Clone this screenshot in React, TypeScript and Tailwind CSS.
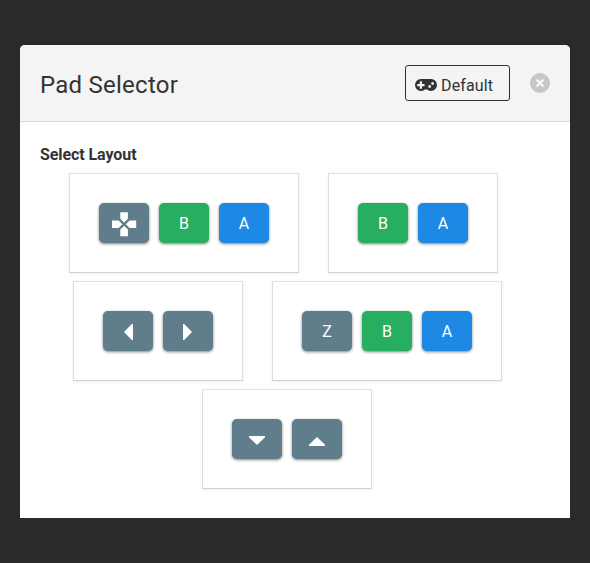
import type { ReactNode } from 'react';

const tones = {
  slate: 'bg-[#607d8b]',
  green: 'bg-[#27ae60]',
  blue: 'bg-[#1e88e5]',
};

function Key({ tone = 'slate', children }: { tone?: keyof typeof tones; children: ReactNode }) {
  return (
    <button
      className={`flex h-10 w-[50px] items-center justify-center rounded-[5px] pt-px text-base text-white shadow-[0_1px_3px_rgba(0,0,0,0.5)] ${tones[tone]}`}
    >
      {children}
    </button>
  );
}

function Card({ children }: { children: ReactNode }) {
  return (
    <div className="flex h-[100px] gap-2.5 border border-t-[#e2e2e2] border-x-[#dedede] border-b-[#d2d2d2] bg-white p-[29px] shadow-[0_1px_3px_rgba(0,0,0,0.08)]">
      {children}
    </div>
  );
}

function Shape({ d }: { d: string }) {
  return (
    <svg width="50" height="40" viewBox="0 0 50 40" className="-mt-px shrink-0" fill="#fff">
      <path d={d} />
    </svg>
  );
}

function Gamepad() {
  return (
    <svg width="22" height="12" viewBox="0 0 1920 1024" preserveAspectRatio="none" fill="#333">
      <path
        transform="matrix(1 0 0 -1 0 1024)"
        d="M832 448v128q0 14 -9 23t-23 9h-192v192q0 14 -9 23t-23 9h-128q-14 0 -23 -9t-9 -23v-192h-192q-14 0 -23 -9t-9 -23v-128q0 -14 9 -23t23 -9h192v-192q0 -14 9 -23t23 -9h128q14 0 23 9t9 23v192h192q14 0 23 9t9 23zM1408 384q0 -53 -37.5 -90.5t-90.5 -37.5t-90.5 37.5t-37.5 90.5t37.5 90.5t90.5 37.5t90.5 -37.5t37.5 -90.5zM1664 640q0 -53 -37.5 -90.5t-90.5 -37.5t-90.5 37.5t-37.5 90.5t37.5 90.5t90.5 37.5t90.5 -37.5t37.5 -90.5zM1920 512q0 -212 -150 -362t-362 -150q-192 0 -338 128h-220q-146 -128 -338 -128q-212 0 -362 150t-150 362t150 362t362 150h896q212 0 362 -150t150 -362z"
        fillRule="evenodd"
      />
    </svg>
  );
}

export default function App() {
  return (
    <div className="h-[563px] w-[590px] bg-[#2a2a2a] px-5 pt-[45px] font-['Roboto',sans-serif] text-[#333]">
      <div className="h-[473px] overflow-hidden rounded-t-[5px] bg-white">
        <header className="flex h-[77px] items-center border-b border-[#d8d8d8] bg-[#f4f4f4] px-5">
          <h1 className="mt-1 flex-1 text-2xl leading-8 tracking-[0.25px]">Pad Selector</h1>
          <button className="flex h-9 w-[105px] items-center gap-1 rounded-[3px] border border-[#333] pl-[9px] text-base">
            <span className="mt-1">
              <Gamepad />
            </span>
            <span className="mt-[6px] leading-5 tracking-[0.15px]">Default</span>
          </button>
          <button className="ml-5 h-5 w-5" aria-label="Close">
            <svg width="20" height="20" viewBox="0 0 20 20">
              <circle cx="10" cy="10" r="10" fill="#c6c6c6" />
              <path d="M6.5 6.5l7 7M13.5 6.5l-7 7" stroke="#f8f8f8" strokeWidth="2.3" />
            </svg>
          </button>
        </header>
        <h2 className="ml-5 pt-[23px] text-base leading-5 font-bold tracking-[-0.08px]">Select Layout</h2>
        <div className="mt-2 flex flex-col gap-2">
          <div className="flex gap-[29px] pl-[49px]">
            <Card>
              <Key>
                <Shape d="M21.3 9.2h7.6v6.6L25.1 19.6l-3.8-3.8zM13 17.4h6.6L23.4 21.2l-3.8 3.8H13zM37.2 17.4h-6.6L26.8 21.2l3.8 3.8h6.6zM21.3 33.2h7.6v-6.6L25.1 22.8l-3.8 3.8z" />
              </Key>
              <Key tone="green">B</Key>
              <Key tone="blue">A</Key>
            </Card>
            <Card>
              <Key tone="green">B</Key>
              <Key tone="blue">A</Key>
            </Card>
          </div>
          <div className="flex gap-[29px] pl-[53px]">
            <Card>
              <Key>
                <Shape d="M30 13v16h-1.2L21 21l7.8-8z" />
              </Key>
              <Key>
                <Shape d="M20 13v16h1.2L29 21l-7.8-8z" />
              </Key>
            </Card>
            <Card>
              <Key>Z</Key>
              <Key tone="green">B</Key>
              <Key tone="blue">A</Key>
            </Card>
          </div>
          <div className="flex pl-[182px]">
            <Card>
              <Key>
                <Shape d="M17 17h16v1.2L25 26l-8-7.8z" />
              </Key>
              <Key>
                <Shape d="M17 27h16v-1.2L25 18l-8 7.8z" />
              </Key>
            </Card>
          </div>
        </div>
      </div>
    </div>
  );
}
